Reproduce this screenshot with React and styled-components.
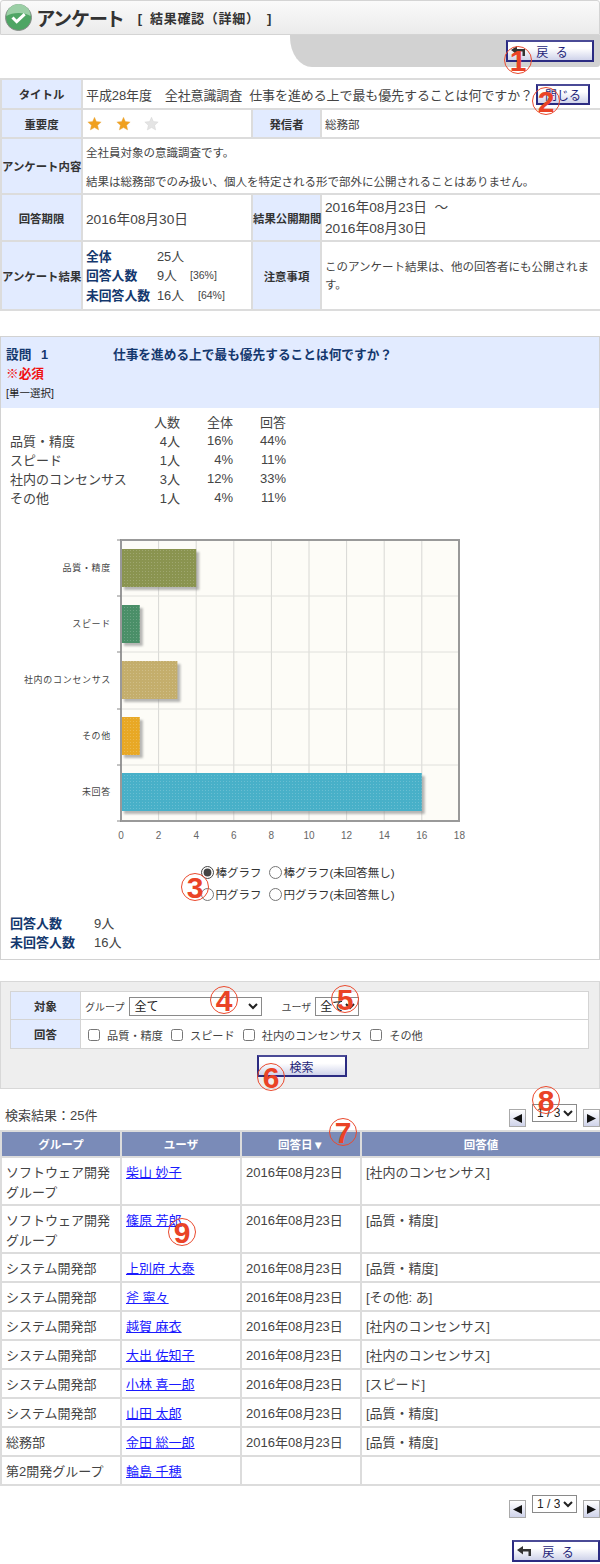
import React from 'react';
import styled, { createGlobalStyle } from 'styled-components';

const Global = createGlobalStyle`
html, body { margin: 0; padding: 0; background: #fff; }
body {
  font-family: "Liberation Sans", "Noto Sans CJK JP", sans-serif;
  font-size: 13px;
  color: #333;
}
table { border-collapse: collapse; table-layout: fixed; }
`;

const Page = styled.div`
  position: relative;
  width: 600px;
  height: 1564px;
  overflow: hidden;
`;

const Header = styled.div`
  height: 35px;
  box-sizing: border-box;
  border: 1px solid #d4d4d4;
  border-radius: 3px 3px 0 0;
  background: linear-gradient(#fafafa, #ebebeb);
  display: flex;
  align-items: center;
  gap: 5px;
  padding-left: 4px;
`;

const PageTitle = styled.h1`
  margin: 0;
  font-size: 19px;
  font-weight: bold;
  color: #333;
  font-feature-settings: "palt";
`;

const SubTitle = styled.span`
  margin-left: 9px;
  font-size: 13px;
  font-weight: bold;
  color: #333;
  word-spacing: 3px;
  letter-spacing: .7px;
`;

const Shelf = styled.div`
  margin-left: 290px;
  height: 32px;
  box-sizing: border-box;
  background: #d2d2d2;
  border-bottom-left-radius: 22px 30px;
  border-bottom-right-radius: 3px;
  display: flex;
  justify-content: flex-end;
  padding: 5px 6px 0 0;
`;

const NavButton = styled.button`
  width: ${p => p.$w}px;
  height: 22px;
  flex-shrink: 0;
  box-sizing: border-box;
  padding: 0 0 0 ${p => (p.$pad ? p.$pad : 0)}px;
  border: 2px solid #2b2b82;
  border-top-color: #4a4a96;
  background: linear-gradient(#fff, #fff 35%, #cfd3ea);
  color: #1e1e78;
  font: 12px "Liberation Sans", "Noto Sans CJK JP", sans-serif;
  display: flex;
  align-items: center;
  justify-content: center;
  position: relative;
  word-spacing: 4px;
`;

const BackGlyph = styled.svg`
  position: absolute;
  left: 3px;
  top: 3px;
`;

const InfoTable = styled.table`
  width: 600px;
  margin-top: 11px;
  td, th { border: 2px solid #dcdcdc; }
`;

const Label = styled.th`
  background: #e2ebff;
  color: #333;
  font-size: 11.4px;
  font-weight: bold;
  padding: 0;
  white-space: nowrap;
`;

const Value = styled.td`
  padding: ${p => (p.$compact ? '1px 0 0 3px' : '0 4px 0 3px')};
  font-size: ${p => (p.$small ? '11.5px' : '13.7px')};
  line-height: ${p => (p.$lh ? p.$lh : 'normal')};
  color: #444;
  vertical-align: middle;
`;

const Row = styled.tr`
  height: ${p => p.$h}px;
`;

const TitleLine = styled.div`
  display: flex;
  align-items: center;
  justify-content: space-between;
  white-space: nowrap;
  font-size: 13px;
  letter-spacing: -.1px;
`;

const SmallButton = styled(NavButton)`
  height: 21px;
  margin-right: 6px;
`;

const Stars = styled.div`
  display: flex;
  gap: 13.5px;
  padding-left: 1px;
`;

const Note = styled.p`
  margin: 0;
  font-size: 11.5px;
  color: #444;
`;

const NoteGap = styled.div`
  height: 13px;
`;

const Tally = styled.div`
  display: grid;
  grid-template-columns: 71px 33px auto;
  line-height: 19.6px;
  font-size: 12.8px;
`;

const TallyHead = styled.span`
  font-weight: bold;
  color: #14386e;
  white-space: nowrap;
`;

const TallyPct = styled.span`
  font-size: 10.5px;
  padding-left: ${p => p.$pad}px;
`;

const Question = styled.section`
  margin-top: 25px;
  height: 624px;
  box-sizing: border-box;
  border: 1px solid #d2d2d2;
`;

const QuestionHead = styled.div`
  height: 71px;
  box-sizing: border-box;
  background: #e2ebff;
  padding: 9px 0 0 5px;
`;

const QuestionLine = styled.div`
  display: flex;
  font-size: 12.7px;
  font-weight: bold;
  color: #14386e;
  line-height: 18px;
`;

const QuestionNo = styled.span`
  width: 107px;
  word-spacing: 6px;
`;

const Required = styled.div`
  font-size: 12.7px;
  font-weight: bold;
  color: #f01010;
  line-height: 20px;
`;

const QuestionKind = styled.div`
  font-size: 10.5px;
  line-height: 18px;
  color: #222;
`;

const StatsTable = styled.table`
  margin: 4px 0 0 9px;
  width: 276px;
  font-size: 13px;
  color: #444;
  th, td {
    padding: 0;
    height: 19px;
    font-weight: normal;
    text-align: right;
  }
  th:first-child, td:first-child { text-align: left; }
`;

const ChartBox = styled.div`
  margin: 23px 0 0 -1px;
`;

const ChartSvg = styled.svg`
  display: block;
`;

const RadioGrid = styled.div`
  display: grid;
  grid-template-columns: auto auto;
  justify-content: center;
  column-gap: 8px;
  row-gap: 2px;
  margin: 12px 0 0 -4px;
  font-size: 11.5px;
  color: #333;
`;

const RadioLabel = styled.label`
  display: flex;
  align-items: center;
  gap: 1px;
  height: 20px;
  white-space: nowrap;
`;

const Radio = styled.input`
  margin: 0;
  width: 13px;
  height: 13px;
  accent-color: #444;
`;

const Summary = styled.div`
  margin: 10px 0 0 9px;
  display: grid;
  grid-template-columns: 84px auto;
  justify-content: start;
  line-height: 19px;
  font-size: 13px;
  color: #444;
`;

const SearchPanel = styled.section`
  margin-top: 21px;
  height: 108px;
  box-sizing: border-box;
  background: #eee;
  border: 1px solid #d8d8d8;
  padding: 9px 10px 0 9px;
`;

const SearchTable = styled.table`
  width: 579px;
  background: #fff;
  td, th { border: 1px solid #d4d4d4; }
`;

const FilterCell = styled.td`
  padding: 2px 0 0 4px;
  font-size: 11.2px;
  color: #444;
`;

const FilterLine = styled.div`
  display: flex;
  align-items: center;
`;

const NativeSelect = styled.select`
  width: ${p => p.$w}px;
  height: ${p => p.$h || 19}px;
  box-sizing: border-box;
  margin-left: ${p => p.$ml || 0}px;
  padding: 0;
  font: 12px "Liberation Sans", "Noto Sans CJK JP", sans-serif;
  background: #fff;
  color: #222;
  border: 1px solid #8a8a8a;
`;

const FilterText = styled.span`
  margin-left: ${p => p.$ml || 0}px;
  font-size: ${p => (p.$small ? '10px' : 'inherit')};
`;

const Check = styled.input`
  margin: 0 0 0 ${p => p.$ml}px;
  width: 12px;
  height: 12px;
`;

const SearchButtonRow = styled.div`
  display: flex;
  justify-content: center;
  margin-top: 6px;
  padding-left: 4px;
`;

const ResultBar = styled.div`
  height: 41px;
  box-sizing: border-box;
  display: flex;
  align-items: flex-end;
  justify-content: space-between;
  padding-bottom: 3px;
  padding-left: 5px;
`;

const ResultCount = styled.span`
  font-size: 13px;
  color: #444;
  margin-bottom: 3px;
`;

const Pager = styled.div`
  display: flex;
  align-items: flex-start;
  justify-content: flex-end;
  gap: 6px;
  margin-top: ${p => p.$mt || 0}px;
`;

const PagerArrow = styled.button`
  width: 17px;
  height: 18px;
  margin-top: 5px;
  padding: 0;
  border: 1px solid #aaa;
  background: linear-gradient(#fff, #cfd3ea);
  font-size: 0;
  display: flex;
  align-items: center;
  justify-content: center;
`;

const ResultTable = styled.table`
  width: 600px;
  font-size: 13px;
  color: #444;
  td, th { border: 2px solid #dcdcdc; }
`;

const HeadCell = styled.th`
  height: 24px;
  padding: 0;
  background: #7a8bb8;
  color: #fff;
  font-size: 11.5px;
  font-weight: bold;
`;

const Cell = styled.td`
  padding: 5px 3px 0 4px;
  vertical-align: top;
  line-height: 20px;
`;

const UserLink = styled.a`
  color: #1a1aff;
  text-decoration: underline;
`;

const FooterBack = styled.div`
  display: flex;
  justify-content: flex-end;
  margin-top: 22px;
`;

const Badge = styled.span`
  position: absolute;
  left: ${p => p.$x - 14}px;
  top: ${p => p.$y - 14}px;
  width: 28px;
  height: 28px;
  box-sizing: border-box;
  border: 1px solid #ea4a2e;
  border-radius: 50%;
  color: #ea4326;
  font: bold 30px/27px "Liberation Sans", sans-serif;
  text-align: center;
`;

const StatusIcon = () => (
  <svg width="27" height="27" viewBox="0 0 27 27">
    <circle cx="13.5" cy="13.5" r="13" fill="#4ea564" stroke="#8a8a8a" strokeWidth="1" />
    <path d="M1.5 12a12 12 0 0 1 24 0c-6-4-18-4-24 0z" fill="#9bcfa6" />
    <path d="M7.5 13.5l4.2 4.2 8-7.5" fill="none" stroke="#fff" strokeWidth="3" />
  </svg>
);

const Star = ({ on }) => (
  <svg width="15" height="15" viewBox="0 0 18 17">
    <path d="M9 1l2.3 5.2 5.7.6-4.2 3.8 1.2 5.6L9 13.4l-5 2.8 1.2-5.6L1 6.8l5.7-.6z"
      fill={on ? '#f0a01e' : '#e4e4e4'} stroke={on ? '#e8b050' : '#d0d0d0'} strokeWidth=".5" />
  </svg>
);

const BackIcon = () => (
  <BackGlyph width="15" height="14" viewBox="0 0 15 14">
    <path d="M0 5l6-4v3h8v7h-2.5V6.5H6v3z" fill="#333" />
  </BackGlyph>
);

const Arrow = ({ dir }) => (
  <svg width="11" height="9" viewBox="0 0 11 9">
    <path d={dir === 'left' ? 'M1 4.5L10 0v9z' : 'M10 4.5L1 0v9z'} fill="#111" />
  </svg>
);

const bars = [
  { label: '品質・精度', value: 4, color: '#8a9450', y: 549 },
  { label: 'スピード', value: 1, color: '#4a8f68', y: 605 },
  { label: '社内のコンセンサス', value: 3, color: '#c4ae6c', y: 661 },
  { label: 'その他', value: 1, color: '#e8a825', y: 717 },
  { label: '未回答', value: 16, color: '#48b0c8', y: 773 },
];

// chart keeps page coordinates, the viewBox starts where the chart sits on the page
const Chart = () => {
  const unit = 18.8;
  const left = 121;
  return (
    <ChartSvg width="600" height="320" viewBox="0 530 600 320">
      <defs>
        <pattern id="dots" width="3" height="3" patternUnits="userSpaceOnUse">
          <rect x="1" y="1" width="1" height="1" fill="#fff" opacity=".18" />
        </pattern>
        <filter id="soft"><feGaussianBlur stdDeviation="1" /></filter>
      </defs>
      <rect x={left} y="540" width="338" height="281" fill="#fdfcf7" />
      {[2, 4, 6, 8, 10, 12, 14, 16].map(v => (
        <line key={v} x1={left + v * unit} x2={left + v * unit} y1="540" y2="821" stroke="#d8d8d4" />
      ))}
      {[596, 652, 709, 765].map(y => (
        <line key={y} x1={left} x2="459" y1={y} y2={y} stroke="#e0e0dc" />
      ))}
      {bars.map(b => (
        <g key={b.label}>
          <rect x={left + 3} y={b.y + 3} width={b.value * unit} height="38" fill="#888" opacity=".6" filter="url(#soft)" />
          <rect x={left} y={b.y} width={b.value * unit} height="38" fill={b.color} />
          <rect x={left} y={b.y} width={b.value * unit} height="38" fill="url(#dots)" />
          <text x="111" y={b.y + 22} textAnchor="end" fontSize="9" fill="#444" letterSpacing=".7">{b.label}</text>
        </g>
      ))}
      <path d="M121 540H459V821H121z" fill="none" stroke="#999" strokeWidth="2" />
      {[540, 596, 652, 709, 765, 821].map(y => (
        <line key={y} x1="117" x2="121" y1={y} y2={y} stroke="#888" />
      ))}
      {[0, 2, 4, 6, 8, 10, 12, 14, 16, 18].map(v => (
        <text key={v} x={left + v * unit} y="839" textAnchor="middle" fontSize="10" fill="#666">{v}</text>
      ))}
    </ChartSvg>
  );
};

const stats = [
  ['品質・精度', '4人', '16%', '44%'],
  ['スピード', '1人', '4%', '11%'],
  ['社内のコンセンサス', '3人', '12%', '33%'],
  ['その他', '1人', '4%', '11%'],
];

const answers = [
  ['ソフトウェア開発グループ', '柴山 妙子', '[社内のコンセンサス]', 48],
  ['ソフトウェア開発グループ', '篠原 芳郎', '[品質・精度]', 48],
  ['システム開発部', '上別府 大泰', '[品質・精度]', 29],
  ['システム開発部', '斧 寧々', '[その他: あ]', 29],
  ['システム開発部', '越賀 麻衣', '[社内のコンセンサス]', 29],
  ['システム開発部', '大出 佐知子', '[社内のコンセンサス]', 29],
  ['システム開発部', '小林 喜一郎', '[スピード]', 29],
  ['システム開発部', '山田 太郎', '[品質・精度]', 29],
  ['総務部', '金田 総一郎', '[品質・精度]', 29],
  ['第2開発グループ', '輪島 千穂', '', 29],
];

const badges = [
  ['1', 518, 60], ['2', 546, 101], ['3', 195, 887], ['4', 224, 1000], ['5', 345, 999],
  ['6', 271, 1077], ['7', 343, 1132], ['8', 546, 1100], ['9', 182, 1232],
];

const PageSelect = () => (
  <NativeSelect $w={45} $h={18} defaultValue="1"><option value="1">1 / 3</option></NativeSelect>
);

const App = () => (
  <Page>
    <Global />
    <Header>
      <StatusIcon />
      <PageTitle>アンケート</PageTitle>
      <SubTitle>[ 結果確認（詳細） ]</SubTitle>
    </Header>
    <Shelf>
      <NavButton $w={88} $pad={4}><BackIcon />戻 る</NavButton>
    </Shelf>

    <InfoTable>
      <colgroup>
        <col width="81" /><col width="170" /><col width="69" /><col width="280" />
      </colgroup>
      <tbody>
        <Row $h={30}>
          <Label>タイトル</Label>
          <Value colSpan={3}>
            <TitleLine>
              <span>平成28年度　全社意識調査&nbsp;&nbsp;仕事を進める上で最も優先することは何ですか？</span>
              <SmallButton $w={54}>閉じる</SmallButton>
            </TitleLine>
          </Value>
        </Row>
        <Row $h={29}>
          <Label>重要度</Label>
          <Value><Stars><Star on /><Star on /><Star /></Stars></Value>
          <Label>発信者</Label>
          <Value $small>総務部</Value>
        </Row>
        <Row $h={56}>
          <Label>アンケート内容</Label>
          <Value colSpan={3}>
            <Note>全社員対象の意識調査です。</Note>
            <NoteGap />
            <Note>結果は総務部でのみ扱い、個人を特定される形で部外に公開されることはありません。</Note>
          </Value>
        </Row>
        <Row $h={47}>
          <Label>回答期限</Label>
          <Value>2016年08月30日</Value>
          <Label>結果公開期間</Label>
          <Value $lh="21px">2016年08月23日&nbsp;&nbsp;～<br />2016年08月30日</Value>
        </Row>
        <Row $h={69}>
          <Label>アンケート結果</Label>
          <Value $compact>
            <Tally>
              <TallyHead>全体</TallyHead><span>25人</span><span />
              <TallyHead>回答人数</TallyHead><span>9人</span><TallyPct $pad={0}>[36%]</TallyPct>
              <TallyHead>未回答人数</TallyHead><span>16人</span><TallyPct $pad={8}>[64%]</TallyPct>
            </Tally>
          </Value>
          <Label>注意事項</Label>
          <Value $small $lh="18px">このアンケート結果は、他の回答者にも公開されます。</Value>
        </Row>
      </tbody>
    </InfoTable>

    <Question>
      <QuestionHead>
        <QuestionLine>
          <QuestionNo>設問 1</QuestionNo>
          <span>仕事を進める上で最も優先することは何ですか？</span>
        </QuestionLine>
        <Required>※必須</Required>
        <QuestionKind>[単一選択]</QuestionKind>
      </QuestionHead>
      <StatsTable>
        <colgroup><col width="143" /><col width="27" /><col width="53" /><col width="53" /></colgroup>
        <thead>
          <tr><th /><th>人数</th><th>全体</th><th>回答</th></tr>
        </thead>
        <tbody>
          {stats.map(s => (
            <tr key={s[0]}><td>{s[0]}</td><td>{s[1]}</td><td>{s[2]}</td><td>{s[3]}</td></tr>
          ))}
        </tbody>
      </StatsTable>
      <ChartBox><Chart /></ChartBox>
      <RadioGrid>
        <RadioLabel><Radio type="radio" name="g" defaultChecked />棒グラフ</RadioLabel>
        <RadioLabel><Radio type="radio" name="g" />棒グラフ(未回答無し)</RadioLabel>
        <RadioLabel><Radio type="radio" name="g" />円グラフ</RadioLabel>
        <RadioLabel><Radio type="radio" name="g" />円グラフ(未回答無し)</RadioLabel>
      </RadioGrid>
      <Summary>
        <TallyHead>回答人数</TallyHead><span>9人</span>
        <TallyHead>未回答人数</TallyHead><span>16人</span>
      </Summary>
    </Question>

    <SearchPanel>
      <SearchTable>
        <colgroup><col width="70" /><col /></colgroup>
        <tbody>
          <Row $h={28}>
            <Label>対象</Label>
            <FilterCell>
              <FilterLine>
                <FilterText $small>グループ</FilterText>
                <NativeSelect $w={133} $ml={5} defaultValue="a"><option value="a">全て</option></NativeSelect>
                <FilterText $small $ml={19}>ユーザ</FilterText>
                <NativeSelect $w={44} $ml={4} defaultValue="a"><option value="a">全て</option></NativeSelect>
              </FilterLine>
            </FilterCell>
          </Row>
          <Row $h={29}>
            <Label>回答</Label>
            <FilterCell>
              <FilterLine>
                <Check type="checkbox" $ml={3} /><FilterText $ml={7}>品質・精度</FilterText>
                <Check type="checkbox" $ml={8} /><FilterText $ml={7}>スピード</FilterText>
                <Check type="checkbox" $ml={8} /><FilterText $ml={7}>社内のコンセンサス</FilterText>
                <Check type="checkbox" $ml={8} /><FilterText $ml={7}>その他</FilterText>
              </FilterLine>
            </FilterCell>
          </Row>
        </tbody>
      </SearchTable>
      <SearchButtonRow><NavButton $w={90}>検索</NavButton></SearchButtonRow>
    </SearchPanel>

    <ResultBar>
      <ResultCount>検索結果：25件</ResultCount>
      <Pager>
        <PagerArrow><Arrow dir="left" /></PagerArrow>
        <PageSelect />
        <PagerArrow><Arrow dir="right" /></PagerArrow>
      </Pager>
    </ResultBar>

    <ResultTable>
      <colgroup><col width="120" /><col width="120" /><col width="120" /><col width="240" /></colgroup>
      <thead>
        <tr><HeadCell>グループ</HeadCell><HeadCell>ユーザ</HeadCell><HeadCell>回答日▼</HeadCell><HeadCell>回答値</HeadCell></tr>
      </thead>
      <tbody>
        {answers.map(a => (
          <Row key={a[1]} $h={a[3]}>
            <Cell>{a[0]}</Cell>
            <Cell><UserLink href="#">{a[1]}</UserLink></Cell>
            <Cell>{a[2] ? '2016年08月23日' : ''}</Cell>
            <Cell>{a[2]}</Cell>
          </Row>
        ))}
      </tbody>
    </ResultTable>

    <Pager $mt={9}>
      <PagerArrow><Arrow dir="left" /></PagerArrow>
      <PageSelect />
      <PagerArrow><Arrow dir="right" /></PagerArrow>
    </Pager>
    <FooterBack><NavButton $w={88} $pad={4}><BackIcon />戻 る</NavButton></FooterBack>

    {badges.map(b => <Badge key={b[0]} $x={b[1]} $y={b[2]}>{b[0]}</Badge>)}
  </Page>
);

export default App;
